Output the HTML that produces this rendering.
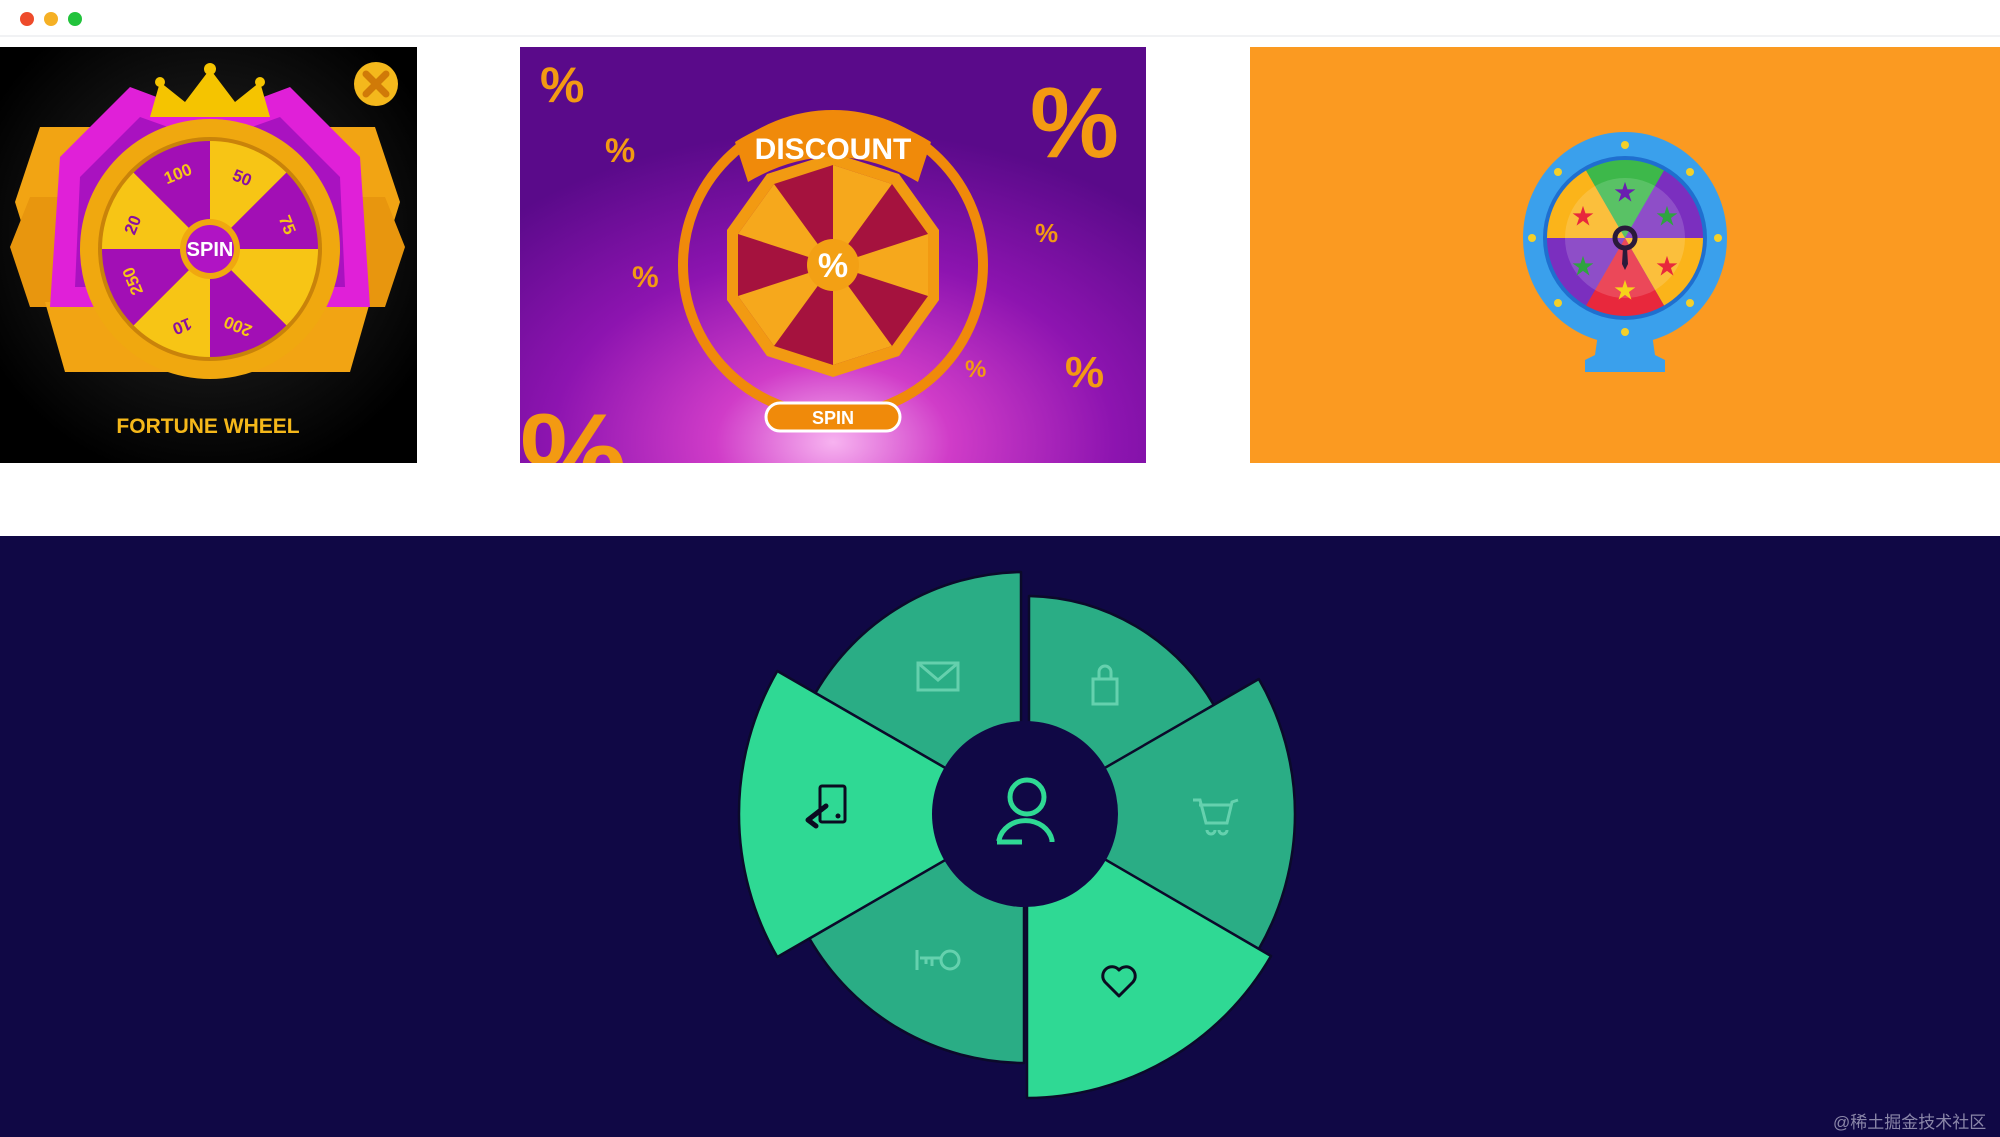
<!DOCTYPE html>
<html><head><meta charset="utf-8"><style>
*{margin:0;padding:0;box-sizing:border-box}
body{width:2000px;height:1137px;overflow:hidden;background:#fff;position:relative;font-family:"Liberation Sans","Noto Sans CJK SC",sans-serif}
.bar{position:absolute;left:0;top:0;width:2000px;height:37px;background:#fff;border-bottom:2px solid #f1f2f4}
.dot{position:absolute;top:12px;width:14px;height:14px;border-radius:50%}
.abs{position:absolute}
</style></head><body>
<div class="bar">
<div class="dot" style="left:20px;background:#ee4b2b"></div>
<div class="dot" style="left:44px;background:#f5b025"></div>
<div class="dot" style="left:68px;background:#22c33c"></div>
</div>

<!-- image 1 -->
<svg class="abs" style="left:0;top:47px" width="417" height="416" viewBox="0 0 417 416">
<defs><radialGradient id="g1" cx="50%" cy="45%" r="60%"><stop offset="0" stop-color="#3a2a10"/><stop offset=".6" stop-color="#111"/><stop offset="1" stop-color="#000"/></radialGradient></defs>
<rect width="417" height="416" fill="url(#g1)"/>
<polygon points="40,80 375,80 400,155 375,235 40,235 15,155" fill="#f2a413"/>
<polygon points="30,150 385,150 405,200 385,260 30,260 10,200" fill="#e8960e"/>
<polygon points="45,255 370,255 350,325 65,325" fill="#f2a413"/>
<path d="M60,110 L130,40 L210,70 L290,40 L360,110 L370,260 L50,260Z" fill="#e020d8"/>
<path d="M80,130 L140,70 L210,95 L280,70 L340,130 L345,240 L75,240Z" fill="#a912c0"/>
<path d="M150,70 L160,35 L185,55 L210,22 L235,55 L260,35 L270,70Z" fill="#f5c400"/>
<circle cx="160" cy="35" r="5" fill="#f5c400"/><circle cx="210" cy="22" r="6" fill="#f5c400"/><circle cx="260" cy="35" r="5" fill="#f5c400"/>
<circle cx="210" cy="202" r="130" fill="#f0a80f"/>
<circle cx="210" cy="202" r="112" fill="#c9830a"/>
<g transform="translate(210,202)">
<path d="M0,0 L0,-108 A108,108 0 0 1 76.4,-76.4Z" fill="#f7c515"/>
<path d="M0,0 L76.4,-76.4 A108,108 0 0 1 108,0Z" fill="#a20fb5"/>
<path d="M0,0 L108,0 A108,108 0 0 1 76.4,76.4Z" fill="#f7c515"/>
<path d="M0,0 L76.4,76.4 A108,108 0 0 1 0,108Z" fill="#a20fb5"/>
<path d="M0,0 L0,108 A108,108 0 0 1 -76.4,76.4Z" fill="#f7c515"/>
<path d="M0,0 L-76.4,76.4 A108,108 0 0 1 -108,0Z" fill="#a20fb5"/>
<path d="M0,0 L-108,0 A108,108 0 0 1 -76.4,-76.4Z" fill="#f7c515"/>
<path d="M0,0 L-76.4,-76.4 A108,108 0 0 1 0,-108Z" fill="#a20fb5"/>
<circle r="30" fill="#f0a80f"/><circle r="24" fill="#b014c4"/>
<text x="0" y="7" text-anchor="middle" font-size="20" font-weight="bold" fill="#fff" font-family="Liberation Sans Narrow,Liberation Sans,sans-serif">SPIN</text>
<g font-size="17" font-weight="bold" text-anchor="middle">
<text x="-30" y="-70" fill="#f7c515" transform="rotate(-22 -30 -70)">100</text>
<text x="30" y="-66" fill="#8a0fa0" transform="rotate(22 30 -66)">50</text>
<text x="72" y="-22" fill="#f7c515" transform="rotate(68 72 -22)">75</text>
<text x="-72" y="-22" fill="#8a0fa0" transform="rotate(-68 -72 -22)">20</text>
<text x="-72" y="30" fill="#f7c515" transform="rotate(-112 -72 30)">250</text>
<text x="-30" y="72" fill="#8a0fa0" transform="rotate(158 -30 72)">10</text>
<text x="30" y="72" fill="#f7c515" transform="rotate(-158 30 72)">200</text>
</g></g>
<circle cx="376" cy="37" r="22" fill="#f4b81c"/>
<path d="M366,27 L386,47 M386,27 L366,47" stroke="#d07a08" stroke-width="7" stroke-linecap="round"/>
<text x="208" y="386" text-anchor="middle" font-size="21" font-weight="bold" fill="#f5b81a" font-family="Liberation Sans Narrow,Liberation Sans,sans-serif">FORTUNE WHEEL</text>
</svg>

<!-- image 2 -->
<svg class="abs" style="left:520px;top:47px" width="626" height="416" viewBox="0 0 626 416">
<defs>
<radialGradient id="g2" cx="50%" cy="95%" r="75%"><stop offset="0" stop-color="#f7b3f0"/><stop offset=".25" stop-color="#d03cc8"/><stop offset=".6" stop-color="#8d14b0"/><stop offset="1" stop-color="#5a0a8a"/></radialGradient>
</defs>
<rect width="626" height="416" fill="url(#g2)"/>
<g fill="#f39a12" font-weight="bold" font-family="Liberation Sans,sans-serif">
<text x="20" y="55" font-size="50">%</text>
<text x="85" y="115" font-size="34">%</text>
<text x="510" y="110" font-size="100">%</text>
<text x="515" y="195" font-size="26">%</text>
<text x="112" y="240" font-size="30">%</text>
<text x="545" y="340" font-size="44">%</text>
<text x="445" y="330" font-size="24">%</text>
<text x="0" y="450" font-size="120">%</text>
</g>
<circle cx="313" cy="218" r="150" fill="none" stroke="#f08a0a" stroke-width="10"/>
<g transform="translate(313,218)">
<polygon points="0,-112 66,-91 106,-35 106,35 66,91 0,112 -66,91 -106,35 -106,-35 -66,-91" fill="#f29a12"/>
<polygon points="0,-100 59,-81 95,-31 95,31 59,81 0,100 -59,81 -95,31 -95,-31 -59,-81" fill="#a5123e"/>
<g fill="#f6a81c">
<path d="M0,0 L0,-100 L59,-81Z"/><path d="M0,0 L95,-31 L95,31Z"/><path d="M0,0 L59,81 L0,100Z"/><path d="M0,0 L-95,31 L-59,81Z"/><path d="M0,0 L-95,-31 L-59,-81Z"/>
</g>
<circle r="26" fill="#f3a014"/>
<text y="12" text-anchor="middle" font-size="34" font-weight="bold" fill="#fff">%</text>
</g>
<path d="M215,95 Q313,35 411,95 L398,135 Q313,85 228,135Z" fill="#f08a0a"/>
<text x="313" y="112" text-anchor="middle" font-size="30" font-weight="bold" fill="#fff">DISCOUNT</text>
<rect x="246" y="356" width="134" height="28" rx="14" fill="#f08a0a" stroke="#fff" stroke-width="3"/>
<text x="313" y="377" text-anchor="middle" font-size="18" font-weight="bold" fill="#fff">SPIN</text>
</svg>

<!-- image 3 -->
<div class="abs" style="left:1250px;top:47px;width:750px;height:416px;background:#fb9a21"></div>
<svg class="abs" style="left:1500px;top:120px" width="250" height="270" viewBox="0 0 250 270">
<path d="M100,200 L150,200 L155,235 L165,240 L165,252 L85,252 L85,240 L95,235Z" fill="#3aa0ec"/>
<ellipse cx="125" cy="118" rx="102" ry="106" fill="#3aa0ec"/>
<circle cx="125" cy="118" r="82" fill="#1f6fcf"/>
<g transform="translate(125,118)">
<path d="M0,0 L-39,-67.5 A78,78 0 0 1 39,-67.5Z" fill="#3db84a"/>
<path d="M0,0 L39,-67.5 A78,78 0 0 1 78,0Z" fill="#7b2fbf"/>
<path d="M0,0 L78,0 A78,78 0 0 1 39,67.5Z" fill="#fbb41a"/>
<path d="M0,0 L39,67.5 A78,78 0 0 1 -39,67.5Z" fill="#e8283c"/>
<path d="M0,0 L-39,67.5 A78,78 0 0 1 -78,0Z" fill="#7b2fbf"/>
<path d="M0,0 L-78,0 A78,78 0 0 1 -39,-67.5Z" fill="#fbb41a"/>
<circle r="60" fill="#fff" opacity=".15"/>
<g font-size="22" text-anchor="middle">
<text x="0" y="-38" fill="#6a1fb0">★</text><text x="42" y="-14" fill="#2fa340">★</text><text x="42" y="36" fill="#e8283c">★</text>
<text x="0" y="60" fill="#f6d21a">★</text><text x="-42" y="36" fill="#2fa340">★</text><text x="-42" y="-14" fill="#e8283c">★</text></g>
<circle r="10" fill="none" stroke="#2a1a3a" stroke-width="5"/>
<path d="M-2,10 L2,10 L3,26 L0,32 L-3,26Z" fill="#2a1a3a"/>
</g>
<g fill="#f4d02a"><circle cx="125" cy="25" r="4"/><circle cx="190" cy="52" r="4"/><circle cx="218" cy="118" r="4"/><circle cx="190" cy="183" r="4"/><circle cx="125" cy="212" r="4"/><circle cx="58" cy="183" r="4"/><circle cx="32" cy="118" r="4"/><circle cx="58" cy="52" r="4"/></g>
</svg>

<!-- bottom -->
<svg class="abs" style="left:0;top:536px" width="2000" height="601" viewBox="0 536 2000 601">
<rect x="0" y="536" width="2000" height="601" fill="#100845"/>
<g stroke="#0b0a2a" stroke-width="2.5" stroke-linejoin="round">
<path d="M1025 814 L815.4 693 A242 242 0 0 1 1021 572 L1021 814Z" fill="#2aad85"/>
<path d="M1029 814 L1029 596 A218 218 0 0 1 1213.8 705 Z" fill="#2aad85"/>
<path d="M1025 814 L1258.8 679 A270 270 0 0 1 1258.8 949 Z" fill="#2aad85"/>
<path d="M1027 814 L1271 956 A284 284 0 0 1 1027 1098 Z" fill="#2fd994"/>
<path d="M1024 814 L1024 1063 A249 249 0 0 1 809.4 938.5 Z" fill="#2aad85"/>
<path d="M1025 814 L777.3 957 A286 286 0 0 1 777.3 671 Z" fill="#2fd994"/>
</g>
<circle cx="1025" cy="814" r="93" fill="#100845"/>
<!-- person -->
<g fill="none" stroke="#2fd994" stroke-width="5">
<circle cx="1027" cy="797" r="17"/>
<path d="M999,841 L999,840 A27 24 0 0 1 1052,840 L1052,842"/>
</g>
<path d="M997,842 L1022,842" stroke="#2fd994" stroke-width="5"/>
<!-- mail etc -->
<g fill="none" stroke="#7fe0bf" stroke-width="3" opacity=".7">
<rect x="918" y="663" width="40" height="27"/><path d="M918,663 L938,680 L958,663"/>
<path d="M1093,679 L1117,679 L1117,704 L1093,704Z M1099,679 L1099,672 A6,6 0 0 1 1111,672 L1111,679"/>
<path d="M1193,800 L1200,800 L1206,823 L1227,823 L1232,802 L1238,800 M1199,805 L1230,805 M1207,830 a3,3 0 0 0 8,0 M1219,830 a3,3 0 0 0 8,0"/>
<path d="M917,950 L917,970 M920,958 L932,958 L932,966 M926,958 L926,964 M932,958 L942,958 M950,960 m-9,0 a9,9 0 1 0 18,0 a9,9 0 1 0 -18,0"/>
</g>
<!-- phone -->
<g fill="none" stroke="#0b0b20" stroke-width="3">
<rect x="820" y="786" width="25" height="36" rx="2"/>
</g>
<circle cx="838" cy="816" r="2.5" fill="#0b0b20"/>
<path d="M826,806 L808,820 L816,826" fill="none" stroke="#0b0b20" stroke-width="5" stroke-linecap="round" stroke-linejoin="round"/>
<!-- heart -->
<path d="M1119,996 L1105,982 A8,8 0 0 1 1119,970 A8,8 0 0 1 1133,982 Z" fill="none" stroke="#0b0b20" stroke-width="3" stroke-linejoin="round"/>
</svg>
<div class="abs" style="left:1833px;top:1108px;font-size:17px;color:#8a86a8;font-family:'Liberation Sans','Noto Sans CJK SC',sans-serif">@稀土掘金技术社区</div>
</body></html>
